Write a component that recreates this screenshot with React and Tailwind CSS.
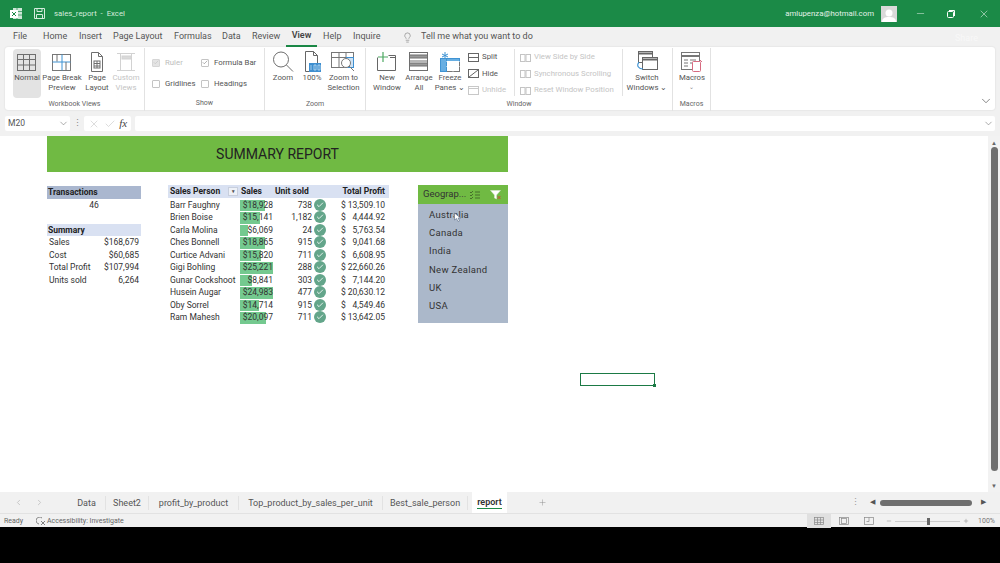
import React from "react";
import { Check, ChevronDown, ChevronLeft, ChevronRight, Lightbulb, Minus, Plus, X } from "lucide-react";

const salesRows = [
  ["Barr Faughny", 18928, "738", "13,509.10"],
  ["Brien Boise", 15141, "1,182", "4,444.92"],
  ["Carla Molina", 6069, "24", "5,763.54"],
  ["Ches Bonnell", 18865, "915", "9,041.68"],
  ["Curtice Advani", 15820, "711", "6,608.95"],
  ["Gigi Bohling", 25221, "288", "22,660.26"],
  ["Gunar Cockshoot", 8841, "303", "7,144.20"],
  ["Husein Augar", 24983, "477", "20,630.12"],
  ["Oby Sorrel", 14714, "915", "4,549.46"],
  ["Ram Mahesh", 20097, "711", "13,642.05"],
];

const summaryRows = [
  ["Sales", "$168,679"],
  ["Cost", "$60,685"],
  ["Total Profit", "$107,994"],
  ["Units sold", "6,264"],
];

const menuItems = [
  ["File", "w-[30px] ml-[13px]"],
  ["Home", "w-[36px]"],
  ["Insert", "w-[34px]"],
  ["Page Layout", "w-[61px]"],
  ["Formulas", "w-[48px]"],
  ["Data", "w-[30px]"],
  ["Review", "w-[40px]"],
];

const Ico = ({ children, w = 24, h = 22, dim }) => (
  <svg width={w} height={h} viewBox={`0 0 ${w} ${h}`} fill="none" stroke="#6e6e6e" strokeWidth="1" className={dim ? "opacity-30" : ""}>
    {children}
  </svg>
);

const BigButton = ({ width, lines, icon, dim, active, caret }) => (
  <div className={`${width} flex flex-col items-center shrink-0 h-[49px] pt-[1px] rounded-sm ${active ? "bg-[#e3e3e3]" : ""}`}>
    <div className="h-[23px] flex items-center justify-center">{icon}</div>
    <div className={`text-center text-[7.8px] leading-[10px] ${dim ? "text-[#c4c4c4]" : "text-[#555]"}`}>
      {lines.map((l, i) => (
        <div key={i} className="whitespace-nowrap">{l}</div>
      ))}
      {caret && <div className="text-[6px] leading-[8px] text-[#888]">⌄</div>}
    </div>
  </div>
);

const Group = ({ width, label, children }) => (
  <div className={`${width} shrink-0 h-full relative flex flex-col border-r border-[#e2e2e2] my-[1px]`}>
    <div className="flex-1 flex pt-[1px]">{children}</div>
    <div className="h-[14px] text-center text-[7px] leading-[12px] text-[#666]">{label}</div>
  </div>
);

const Checkbox = ({ label, checked, dim, width }) => (
  <div className={`${width} flex items-center gap-[5px] text-[7.8px] ${dim ? "text-[#bdbdbd]" : "text-[#555]"}`}>
    <span className={`w-[8px] h-[8px] border rounded-[1px] flex items-center justify-center ${dim ? "border-[#d6d6d6] bg-[#e4e4e4]" : "border-[#c4c4c4]"}`}>
      {checked && <Check size={7} strokeWidth={2} color={dim ? "#bbb" : "#666"} />}
    </span>
    {label}
  </div>
);

const SmallButton = ({ label, dim, icon }) => (
  <div className={`h-[16.5px] flex items-center gap-[3px] text-[7.8px] whitespace-nowrap ${dim ? "text-[#c4c4c4]" : "text-[#555]"}`}>
    {icon}
    {label}
  </div>
);

const SplitIcon = () => (
  <svg width="11" height="9" fill="none" stroke="#666"><rect x=".5" y=".5" width="10" height="8" /><path d="M.5 4.5h10" /></svg>
);
const HideIcon = () => (
  <svg width="11" height="9" fill="none" stroke="#666"><rect x=".5" y=".5" width="10" height="8" /><path d="M1 8 10 1" /></svg>
);
const UnhideIcon = () => (
  <svg width="11" height="9" fill="none" stroke="#c8c8c8"><rect x=".5" y=".5" width="10" height="8" /><path d="M.5 2.5h10" /></svg>
);
const TwoPagesIcon = () => (
  <svg width="11" height="9" fill="none" stroke="#c4c4c4"><rect x=".5" y="1.5" width="4.5" height="7" /><rect x="6" y="1.5" width="4.5" height="7" /></svg>
);

const Ribbon = () => (
  <div className="mx-[5px] h-[63px] bg-white rounded-[3px] shadow-[0_0_2px_rgba(0,0,0,0.12)] flex relative">
    <Group width="w-[140px]" label="Workbook Views">
      <div className="w-[8px]" />
      <BigButton width="w-[28px]" active lines={["Normal"]} icon={
        <Ico w={20} h={18}><rect x=".5" y="1.5" width="18" height="16" /><path d="M.5 6.5h18M.5 12h18M6.5 1.5v16M12.5 1.5v16" /></Ico>
      } />
      <BigButton width="w-[42px]" lines={["Page Break", "Preview"]} icon={
        <Ico w={20} h={18}><rect x=".5" y="1.5" width="18" height="16" stroke="#777" /><path d="M.5 9h18" stroke="#3f93d3" /><path d="M10 1.5v16" stroke="#3f93d3" /><path d="M5 1.5v7M14 9v8.5" /></Ico>
      } />
      <BigButton width="w-[28px]" lines={["Page", "Layout"]} icon={
        <Ico w={16} h={20}><path d="M2.5.5h7l4 4v15h-11zM9.5.5v4h4" /><rect x="5" y="9" width="6" height="7" /><path d="M5 11.5h6M5 14h6M8 9v7" /></Ico>
      } />
      <BigButton width="w-[30px]" dim lines={["Custom", "Views"]} icon={
        <Ico w={20} h={20} dim><path d="M1 1.5h18M1 18.5h18M4.5 1.5v17M15.5 1.5v17" /><rect x="6" y="4" width="9" height="3" fill="#888" /></Ico>
      } />
    </Group>
    <Group width="w-[120px]" label="Show">
      <div className="pl-[7px] w-full">
        <div className="flex h-[21px] items-center mt-[3px]">
          <Checkbox width="w-[49px]" dim checked label="Ruler" />
          <Checkbox checked label="Formula Bar" />
        </div>
        <div className="flex h-[21px] items-center">
          <Checkbox width="w-[49px]" label="Gridlines" />
          <Checkbox label="Headings" />
        </div>
      </div>
    </Group>
    <Group width="w-[101px]" label="Zoom">
      <div className="w-[4px]" />
      <BigButton width="w-[28px]" lines={["Zoom"]} icon={
        <Ico w={22} h={22}><circle cx="9" cy="8.5" r="7.5" /><path d="m14.5 14 6.5 6.5" /></Ico>
      } />
      <BigButton width="w-[30px]" lines={["100%"]} icon={
        <svg width="20" height="22" fill="none" stroke="#666"><path d="M3.5.5h8l4 4v16h-12zM11.5.5v4h4" /><rect x="7" y="12" width="12" height="9" fill="#3f8fd0" stroke="none" /><path d="M9 14v5M12 14h2v5h-2zM16 14h2v5h-2z" stroke="#cfe6f7" strokeWidth=".7" /></svg>
      } />
      <BigButton width="w-[33px]" lines={["Zoom to", "Selection"]} icon={
        <svg width="26" height="21" fill="none" stroke="#777"><rect x=".5" y="1.5" width="22" height="15" /><path d="M.5 6.5h22M8 1.5v15M15 1.5v5" /><rect x="15.5" y="6.5" width="7" height="10" fill="#cfe2f3" stroke="#3f8fd0" /><circle cx="15" cy="12" r="4.5" fill="#fff" /><path d="m18 15 5 5" /></svg>
      } />
    </Group>
    <Group width="w-[307px]" label="Window">
      <div className="w-[4px]" />
      <BigButton width="w-[34px]" lines={["New", "Window"]} icon={
        <svg width="22" height="19" fill="none" stroke="#666"><path d="M1.5 5.500v13h18v-15h-7M14 5.500h6" /><path d="M7 0v10M2 5h10" stroke="#4da862" strokeWidth="1.2" /></svg>
      } />
      <BigButton width="w-[30px]" lines={["Arrange", "All"]} icon={
        <Ico w={20} h={20}><rect x=".5" y=".5" width="18" height="18" /><rect x=".5" y="3" width="18" height="3" fill="#999" /><path d="M.5 9h18" /><rect x=".5" y="11" width="18" height="3" fill="#999" /></Ico>
      } />
      <BigButton width="w-[32px]" lines={["Freeze", "Panes ⌄"]} icon={
        <svg width="21" height="20" fill="none" stroke="#3f93d3"><rect x=".5" y="6.5" width="19" height="13" stroke="#777" /><rect x=".5" y="6.5" width="19" height="3" fill="#67aee2" /><rect x=".5" y="6.5" width="6" height="13" fill="#67aee2" /><path d="M6.5 9.5h13M6.5 14.5h13M13 9.5v10" stroke="#fff" /><path d="M5 0v7M2 2l6 3M8 2 2 5" strokeWidth="1" /></svg>
      } />
      <div className="w-[2px]" />
      <div className="w-[47px] border-r border-[#e2e2e2] h-[47px] shrink-0">
        <SmallButton label="Split" icon={<SplitIcon />} />
        <SmallButton label="Hide" icon={<HideIcon />} />
        <SmallButton dim label="Unhide" icon={<UnhideIcon />} />
      </div>
      <div className="w-[108px] pl-[5px] border-r border-[#e2e2e2] h-[47px] shrink-0">
        <SmallButton dim label="View Side by Side" icon={<TwoPagesIcon />} />
        <SmallButton dim label="Synchronous Scrolling" icon={<TwoPagesIcon />} />
        <SmallButton dim label="Reset Window Position" icon={<TwoPagesIcon />} />
      </div>
      <BigButton width="w-[48px]" lines={["Switch", "Windows ⌄"]} icon={
        <svg width="22" height="21" fill="none" stroke="#666"><rect x="2.5" y=".5" width="14" height="11" fill="#fff" /><path d="M2.5 2.5h14" strokeWidth="2" /><rect x="6.5" y="6.5" width="15" height="12" fill="#fff" /><path d="M6.5 8.5h15" strokeWidth="2" /><path d="M3 11c-3 4 0 7 4 7" stroke="#3f93d3" strokeWidth="1.2" /></svg>
      } />
    </Group>
    <Group width="w-[38px]" label="Macros">
      <BigButton width="w-[38px]" caret lines={["Macros"]} icon={
        <svg width="22" height="20" fill="none" stroke="#777"><rect x=".5" y=".5" width="18" height="17" /><path d="M.5 4h18" strokeWidth="2" /><path d="M3 8h4M9 8h6M3 11h4M9 11h3M3 14h4" /><rect x="11.5" y="9.5" width="8" height="10" rx="1" fill="#fff" stroke="#d76a80" /><path d="m19 8 2 2" stroke="#d76a80" /></svg>
      } />
    </Group>
    <ChevronDown size={14} strokeWidth={1.2} color="#555" className="absolute right-[2px] bottom-[2px]" />
  </div>
);

const TitleBar = () => (
  <div className="h-[27px] bg-[#1b8a47] flex items-center text-white text-[7.8px]">
    <svg width="14" height="13" viewBox="0 0 14 13" className="ml-[9px]">
      <rect x="4" y="1" width="9" height="11" fill="#cfe6d8" />
      <path d="M8 1v11M4 4.5h9M4 8h9" stroke="#1b8a47" strokeWidth=".7" />
      <rect x="1" y="3" width="8" height="8" fill="#fff" />
      <path d="m3 5 4 4M7 5 3 9" stroke="#1b8a47" strokeWidth="1" />
    </svg>
    <svg width="11" height="11" fill="none" stroke="#d5ebdd" className="ml-[11px]">
      <path d="M.5.5h10v10H.5zM3 .5v3h5v-3M2.5 10.5v-4h6v4" />
    </svg>
    <span className="ml-[9px] text-[#d5ebdd]">sales_report&nbsp; -&nbsp; Excel</span>
    <span className="ml-auto text-[#e3f1e8]">amlupenza@hotmail.com</span>
    <div className="ml-[7px] w-[16px] h-[16px] bg-[#d9d9d9] flex items-end justify-center overflow-hidden">
      <svg width="14" height="14" fill="#fff"><circle cx="7" cy="5" r="3.5" /><path d="M0 14c0-4 3-5 7-5s7 1 7 5z" /></svg>
    </div>
    <Minus size={11} strokeWidth={1} className="ml-[18px]" />
    <svg width="8" height="8" fill="none" stroke="#fff" className="ml-[21px]"><rect x=".5" y="1.5" width="6" height="6" rx="1" /><path d="M2 .5h5.500V6" /></svg>
    <X size={12} strokeWidth={1} className="ml-[23px] mr-[10px]" />
  </div>
);

const MenuBar = () => (
  <div className="h-[20px] flex items-center text-[9px] text-[#555] relative">
    {menuItems.map(([name, w]) => (
      <div key={name} className={`${w} shrink-0`}>{name}</div>
    ))}
    <div className="w-[31px] ml-[-6px] mr-[6px] h-full flex items-center justify-center font-semibold text-[#444] border-b-2 border-[#1b8a47] shrink-0">View</div>
    <div className="w-[30px] shrink-0">Help</div>
    <div className="w-[45px] shrink-0">Inquire</div>
    <Lightbulb size={11} strokeWidth={1} color="#555" className="ml-[4px]" />
    <span className="ml-[8px]">Tell me what you want to do</span>
    <span className="absolute left-[955px] top-[5px] text-[#f8f8f8]">Share</span>
  </div>
);

const FormulaBar = () => (
  <div className="h-[26px] pt-[1px] flex items-center px-[5px] text-[8.5px] text-[#555]">
    <div className="w-[65px] h-[15px] bg-white rounded-[2px] flex items-center justify-between pl-[3px] pr-[1px]">
      M20
      <ChevronDown size={11} strokeWidth={1.2} color="#666" />
    </div>
    <div className="w-[14px] text-center text-[#888] leading-none">⋮</div>
    <div className="w-[47px] h-[15px] bg-white rounded-[2px] flex items-center justify-around px-[2px]">
      <X size={12} strokeWidth={1} color="#bbb" />
      <Check size={12} strokeWidth={1} color="#bbb" />
      <span className="text-[#444] italic font-['Liberation_Serif',serif] text-[11px]">fx</span>
    </div>
    <div className="ml-[4px] flex-1 h-[15px] bg-white rounded-[2px] flex items-center justify-end pr-[1px]">
      <ChevronDown size={11} strokeWidth={1.2} color="#666" />
    </div>
  </div>
);

const SummaryColumn = () => (
  <div className="w-[94px] shrink-0 text-[8.5px] text-[#333] mt-[1px]">
    <div className="h-[12.5px] leading-[12.5px] px-[1px] font-bold bg-[#aab7cf] text-[#222]">Transactions</div>
    <div className="h-[12.5px] leading-[12.5px] text-center">46</div>
    <div className="h-[12.5px]" />
    <div className="h-[12.5px] leading-[12.5px] px-[1px] font-bold bg-[#d9e1f2] text-[#222]">Summary</div>
    {summaryRows.map(([k, v]) => (
      <div key={k} className="h-[12.5px] leading-[12.5px] flex justify-between px-[2px]">
        <span>{k}</span>
        <span>{v}</span>
      </div>
    ))}
  </div>
);

const SalesTable = () => (
  <div className="w-[221px] shrink-0 ml-[27px] text-[8.5px] text-[#333]">
    <div className="h-[13px] mb-[0.5px] leading-[13px] bg-[#d9e1f2] flex font-bold text-[#222]">
      <div className="w-[72px] pl-[2px] flex items-center justify-between pr-[2px]">
        Sales Person
        <span className="w-[10px] h-[9px] bg-[#eef1f7] border border-[#c8cfdd] text-[5px] leading-[7px] text-center text-[#555]">▾</span>
      </div>
      <div className="w-[35px] pl-[1px]">Sales</div>
      <div className="w-[58px] pl-[0px]">Unit sold</div>
      <div className="flex-1 text-right pr-[4px]">Total Profit</div>
    </div>
    {salesRows.map(([name, sales, units, profit]) => (
      <div key={name} className="h-[12.5px] leading-[12.5px] flex items-center">
        <div className="w-[72px] pl-[2px] whitespace-nowrap">{name}</div>
        <div className="w-[33px] relative text-right">
          <div className="absolute left-0 top-[1px] bottom-0 bg-[#74c98f]" style={{ width: `${(sales / 25221) * 33}px` }} />
          <span className="relative">${sales.toLocaleString("en-US")}</span>
        </div>
        <div className="w-[39px] text-right">{units}</div>
        <div className="w-[12px] ml-[2px] h-[12px] rounded-full bg-[#63a58a] flex items-center justify-center shrink-0">
          <Check size={8} strokeWidth={2.5} color="#fff" />
        </div>
        <div className="flex-1 flex justify-between pl-[15px] pr-[4px]">
          <span>$</span>
          <span>{profit}</span>
        </div>
      </div>
    ))}
  </div>
);

const Slicer = () => (
  <div className="w-[90px] h-[138px] ml-[29px] shrink-0 bg-[#abb8ca] text-[#333] text-[9.5px] relative">
    <div className="h-[19px] bg-[#70ba43] flex items-center pl-[5px] text-[#333]">
      <span className="w-[46px]">Geograp...</span>
      <svg width="12" height="10" fill="none" stroke="#3b5a24" strokeWidth=".8"><path d="m1 2 1 1 2-2M1 5l1 1 2-2M1 8l1 1 2-2M6 2h5M6 5h5M6 8h5" /></svg>
      <svg width="11" height="10" className="ml-[9px]"><path d="M.5.5h10L6.500 5v4L4.500 8V5z" fill="#fff" stroke="#dfe8d8" strokeWidth=".5" /><path d="m7.500 6 3 3M10.500 6l-3 3" stroke="#c2553a" /></svg>
    </div>
    <div className="pt-[2px] pl-[11px]">
      {["Australia", "Canada", "India", "New Zealand", "UK", "USA"].map((c) => (
        <div key={c} className="h-[18.2px] leading-[18.2px] tracking-[0.3px]">{c}</div>
      ))}
    </div>
    <svg width="8" height="11" className="absolute left-[35px] top-[27px]"><path d="M1.500 1v7l2-1.500 1.500 3 1.500-.7L5 6h2.500z" fill="#fff" stroke="#5a6b86" strokeWidth=".6" /></svg>
  </div>
);

const Sheet = () => (
  <div className="h-[356px] bg-white flex relative">
    <div className="flex-1 pl-[47px]">
      <div className="w-[461px] h-[36px] bg-[#70ba43] text-[#222] text-[14px] flex items-center justify-center">SUMMARY REPORT</div>
      <div className="flex mt-[13px]">
        <SummaryColumn />
        <SalesTable />
        <Slicer />
      </div>
    </div>
    <div className="absolute left-[580px] top-[237px] w-[75px] h-[13px] border border-[#1b7a45]">
      <span className="absolute right-[-2px] bottom-[-2px] w-[3px] h-[3px] bg-[#1b7a45]" />
    </div>
    <div className="w-[12px] bg-[#f2f2f2] flex flex-col items-center shrink-0">
      <span className="mt-[2px] h-[9px] text-[6px] leading-[9px] text-[#666]">▲</span>
      <div className="w-[7px] h-[324px] bg-[#6f6f6f] rounded-full" />
      <span className="mt-auto mb-[2px] h-[9px] text-[6px] leading-[9px] text-[#666]">▼</span>
    </div>
  </div>
);

const tabs = [
  ["Data", "w-[38px]"],
  ["Sheet2", "w-[43px]"],
  ["profit_by_product", "w-[90px]"],
  ["Top_product_by_sales_per_unit", "w-[144px]"],
  ["Best_sale_person", "w-[85px]"],
];

const SheetTabs = () => (
  <div className="h-[21px] flex items-center text-[9px] text-[#555]">
    <ChevronLeft size={9} color="#bbb" className="ml-[14px]" />
    <ChevronRight size={9} color="#bbb" className="ml-[12px] mr-[24px]" />
    {tabs.map(([t, w]) => (
      <div key={t} className={`${w} text-center shrink-0 border-r border-[#e2e2e2] h-[14px] leading-[14px]`}>{t}</div>
    ))}
    <div className="ml-[4px] w-[35px] h-full bg-white flex items-center justify-center font-semibold text-[#333] shrink-0">
      <span className="border-b border-[#1b8a47] leading-[12px]">report</span>
    </div>
    <Plus size={9} strokeWidth={1.2} color="#888" className="ml-[31px]" />
    <span className="ml-auto text-[#999] leading-none">⋮</span>
    <span className="ml-[10px] text-[7px] text-[#555]">◀</span>
    <div className="ml-[5px] w-[92px] h-[6px] bg-[#6f6f6f] rounded-full" />
    <span className="ml-[9px] mr-[14px] text-[7px] text-[#555]">▶</span>
  </div>
);

const StatusBar = () => (
  <div className="h-[15px] flex items-center text-[7px] text-[#666] border-t border-[#e2e2e2]">
    <span className="ml-[4px] w-[32px]">Ready</span>
    <svg width="10" height="9" fill="none" stroke="#666" strokeWidth=".8"><path d="M6 1a3.500 3.500 0 1 0-3 6" /><path d="m5 4 4 4M9 4 5 8" /></svg>
    <span className="ml-[1px]">Accessibility: Investigate</span>
    <div className="ml-auto w-[24px] h-full bg-[#e0e0e0] flex items-center justify-center">
      <svg width="10" height="8" fill="none" stroke="#888" strokeWidth=".7"><rect x=".5" y=".5" width="9" height="7" /><path d="M3.500.5v7M6.500.5v7M.5 3h9M.5 5.500h9" /></svg>
    </div>
    <svg width="10" height="8" fill="none" stroke="#888" strokeWidth=".7" className="ml-[8px]"><rect x=".5" y=".5" width="9" height="7" /><rect x="2.500" y="1.500" width="5" height="5" /></svg>
    <svg width="10" height="8" fill="none" stroke="#888" strokeWidth=".7" className="ml-[15px]"><rect x=".5" y=".5" width="9" height="7" /><path d="M5 .5v4H2.500" /></svg>
    <Minus size={6} color="#888" className="ml-[12px]" />
    <div className="ml-[3px] w-[65px] h-[1px] bg-[#ccc] relative">
      <span className="absolute left-[32px] top-[-3px] w-[3px] h-[7px] bg-[#666]" />
    </div>
    <Plus size={6} color="#888" className="ml-[3px]" />
    <span className="ml-[9px] mr-[5px] text-[#777]">100%</span>
  </div>
);

export default function App() {
  return (
    <div className="w-[1000px] h-[563px] bg-black overflow-hidden font-['Roboto',sans-serif]">
      <div className="h-[527px] bg-[#f1f1f1]">
        <TitleBar />
        <MenuBar />
        <Ribbon />
        <FormulaBar />
        <Sheet />
        <SheetTabs />
        <StatusBar />
      </div>
    </div>
  );
}
